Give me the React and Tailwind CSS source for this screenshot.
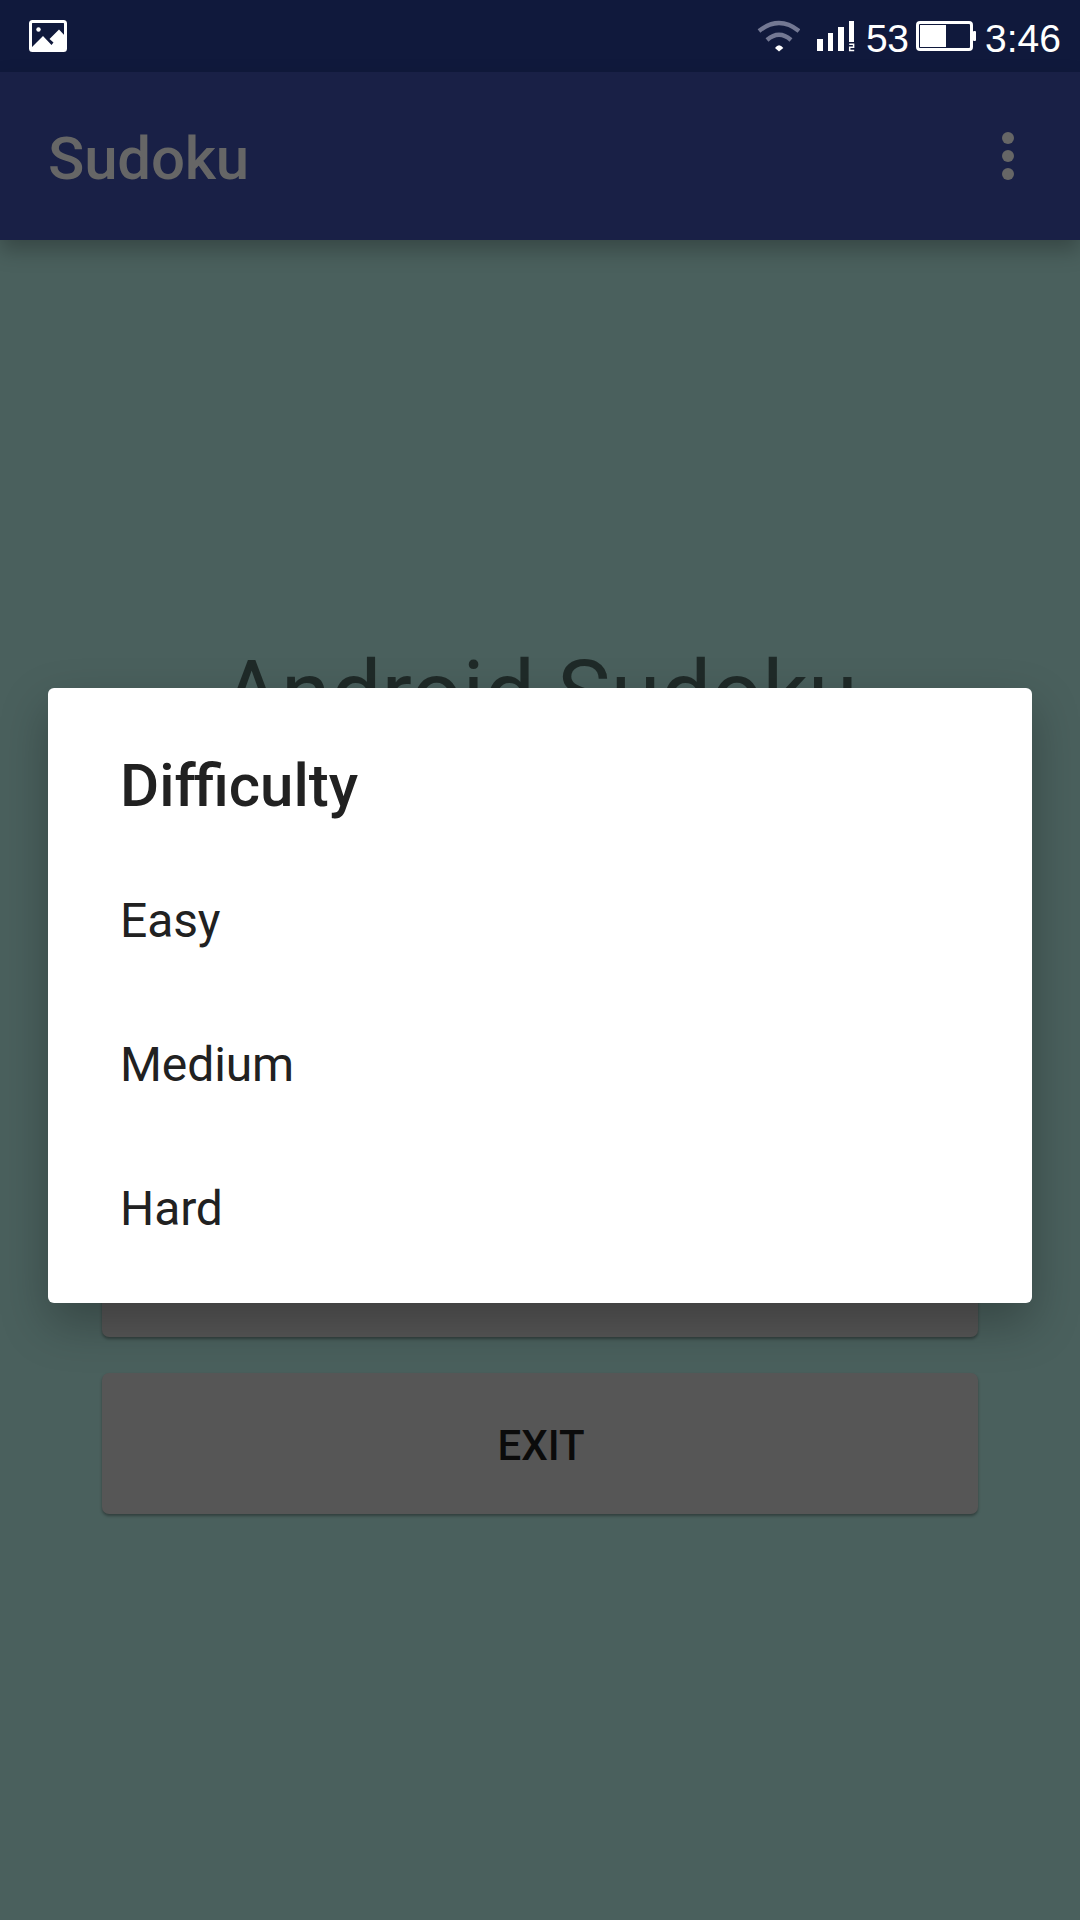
const options = ["Easy", "Medium", "Hard"];

function StatusBar() {
  return (
    <div className="flex h-[72px] items-start justify-between bg-[#10193c] pl-[29px]">
      <svg className="mt-5" width="38" height="32" viewBox="0 0 38 32">
        <rect x="1.5" y="1.5" width="35" height="29" rx="2" fill="none" stroke="#fff" strokeWidth="3" />
        <circle cx="9.5" cy="9.5" r="2.2" fill="#fff" />
        <path d="M2 28 L14 16 L22.500 25 L24.500 22.500 L20.500 19 L30 9.500 L37 17 V31 H2 Z" fill="#fff" />
      </svg>
      <div className="flex items-start">
        <svg className="mt-5" width="43" height="32" viewBox="0 0 43 32" fill="none">
          <path d="M2 11 Q22 -5 42 11" stroke="#737893" strokeWidth="4.400" />
          <path d="M10 20 Q22 9.500 34 20" stroke="#737893" strokeWidth="4.400" />
          <path d="M18 28 Q22 22.500 26.300 28 L22 31.500 Z" fill="#fff" />
        </svg>
        <svg className="ml-[17px] mt-5" width="38" height="32" viewBox="0 0 38 32" fill="#fff">
          <rect x="0" y="19" width="6" height="12" />
          <rect x="11" y="13" width="5" height="18" />
          <rect x="21" y="7" width="6" height="24" />
          <rect x="32" y="1" width="5" height="21" />
          <path d="M32.200 24.200 H36.600 V27.300 H32.700 V30.400 H37.200" fill="none" stroke="#fff" strokeWidth="1.500" />
        </svg>
        <span className="ml-[11px] mt-[17px] w-[42px] whitespace-nowrap font-['Liberation_Sans',sans-serif] text-[39px] leading-[43px] tracking-[-0.5px] text-white">53</span>
        <svg className="ml-2 mt-5" width="61" height="32" viewBox="0 0 61 32">
          <rect x="1.500" y="2.500" width="54" height="27" rx="2.500" fill="none" stroke="#fff" strokeWidth="3" />
          <rect x="4" y="5" width="26" height="22" fill="#fff" />
          <rect x="57" y="11" width="3" height="10" rx="1" fill="#fff" />
        </svg>
        <span className="ml-[8px] mt-[17px] w-[95px] whitespace-nowrap font-['Liberation_Sans',sans-serif] text-[39px] leading-[43px] text-white">3:46</span>
      </div>
    </div>
  );
}

function AppBar() {
  return (
    <header className="relative flex h-[168px] items-center justify-between bg-[#192046] pl-12 pr-[66px] shadow-[0_10px_20px_rgba(0,0,0,0.26)]">
      <h1 className="mt-[5px] text-[60px] font-medium leading-[70px] tracking-[-0.2px] text-[#666]">Sudoku</h1>
      <div className="flex flex-col gap-1.5">
        <span className="h-3 w-3 rounded-full bg-[#666]" />
        <span className="h-3 w-3 rounded-full bg-[#666]" />
        <span className="h-3 w-3 rounded-full bg-[#666]" />
      </div>
    </header>
  );
}

function MenuButton({ children }) {
  return (
    <button className="h-[141px] w-full rounded-[7px] bg-[#565656] pl-0.5 pt-[3px] text-[42px] font-medium text-[#0b0b0b] shadow-[0_2px_3px_rgba(0,0,0,0.35)]">
      {children}
    </button>
  );
}

function DifficultyDialog() {
  return (
    <div role="dialog" className="absolute left-12 top-[688px] h-[615px] w-[984px] rounded-[6px] bg-white text-[#212121] shadow-[0_20px_48px_rgba(0,0,0,0.27)]">
      <h2 className="h-[161px] px-[72px] pt-[63px] text-[60px] font-medium leading-[70px] tracking-normal">
        <span className="-mr-0.5 inline-block">Dif</span>
        <span className="inline-block">ficulty</span>
      </h2>
      <ul>
        {options.map((option) => (
          <li key={option} className="flex h-36 items-center px-[72px] text-[48px] tracking-[-0.1px]">
            {option}
          </li>
        ))}
      </ul>
    </div>
  );
}

export default function App() {
  return (
    <div className="relative h-[1920px] w-[1080px] overflow-hidden bg-[#4a605d] font-[Roboto,sans-serif]">
      <StatusBar />
      <AppBar />
      <main className="flex flex-col px-[102px] pt-[402px]">
        <p className="h-[554px] text-center text-[90px] leading-[106px] text-[#1f2a28]">Android Sudoku</p>
        <div className="flex flex-col gap-9">
          <MenuButton />
          <MenuButton>EXIT</MenuButton>
        </div>
      </main>
      <DifficultyDialog />
    </div>
  );
}
